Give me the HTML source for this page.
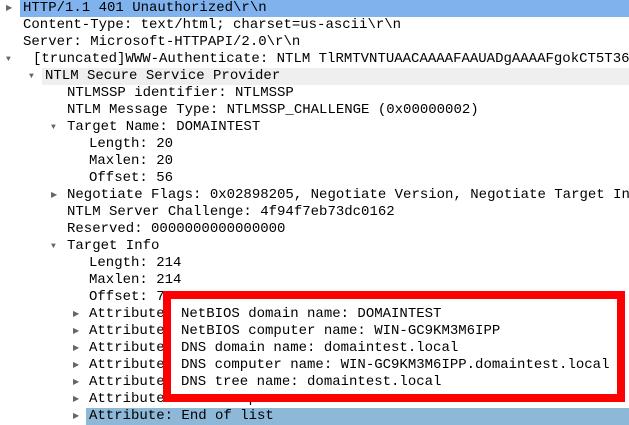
<!DOCTYPE html>
<html><head><style>
body{margin:0;width:629px;height:423px;overflow:hidden;background:#fff;font-family:"Liberation Mono",monospace;font-size:14px;color:#000;position:relative}
.r{position:absolute;height:17px;line-height:17px;white-space:pre;left:0;right:0}
.t{position:absolute;top:0}
.ar{position:absolute;top:0;font-size:8px;color:#666}
.box{position:absolute;left:163px;top:291px;width:446px;height:95px;border:8px solid #f00;background:#fff}
</style></head><body>
<div class="r" style="top:0"><div style="position:absolute;left:20px;right:0;top:0;height:17px;background:#80b3ee"></div><span class="ar" style="left:6px">▶</span><span class="t" style="left:23px">HTTP/1.1 401 Unauthorized\r\n</span></div>
<div class="r" style="top:17px"><span class="t" style="left:23px">Content-Type: text/html; charset=us-ascii\r\n</span></div>
<div class="r" style="top:34px"><span class="t" style="left:23px">Server: Microsoft-HTTPAPI/2.0\r\n</span></div>
<div class="r" style="top:51px"><span class="ar" style="left:6px">▼</span><span class="t" style="left:33px">[truncated]WWW-Authenticate: NTLM TlRMTVNTUAACAAAAFAAUADgAAAAFgokCT5T363</span></div>
<div class="r" style="top:68px"><div style="position:absolute;left:42px;right:0;top:0;height:17px;background:#efefef"></div><span class="ar" style="left:29px">▼</span><span class="t" style="left:45px">NTLM Secure Service Provider</span></div>
<div class="r" style="top:85px"><span class="t" style="left:67px">NTLMSSP identifier: NTLMSSP</span></div>
<div class="r" style="top:102px"><span class="t" style="left:67px">NTLM Message Type: NTLMSSP_CHALLENGE (0x00000002)</span></div>
<div class="r" style="top:119px"><span class="ar" style="left:51px">▼</span><span class="t" style="left:67px">Target Name: DOMAINTEST</span></div>
<div class="r" style="top:136px"><span class="t" style="left:89px">Length: 20</span></div>
<div class="r" style="top:153px"><span class="t" style="left:89px">Maxlen: 20</span></div>
<div class="r" style="top:170px"><span class="t" style="left:89px">Offset: 56</span></div>
<div class="r" style="top:187px"><span class="ar" style="left:51px">▶</span><span class="t" style="left:67px">Negotiate Flags: 0x02898205, Negotiate Version, Negotiate Target In</span></div>
<div class="r" style="top:204px"><span class="t" style="left:67px">NTLM Server Challenge: 4f94f7eb73dc0162</span></div>
<div class="r" style="top:221px"><span class="t" style="left:67px">Reserved: 0000000000000000</span></div>
<div class="r" style="top:238px"><span class="ar" style="left:51px">▼</span><span class="t" style="left:67px">Target Info</span></div>
<div class="r" style="top:255px"><span class="t" style="left:89px">Length: 214</span></div>
<div class="r" style="top:272px"><span class="t" style="left:89px">Maxlen: 214</span></div>
<div class="r" style="top:289px"><span class="t" style="left:89px">Offset: 76</span></div>
<div class="r" style="top:306px"><span class="ar" style="left:73px">▶</span><span class="t" style="left:89px">Attribute</span></div>
<div class="r" style="top:323px"><span class="ar" style="left:73px">▶</span><span class="t" style="left:89px">Attribute</span></div>
<div class="r" style="top:340px"><span class="ar" style="left:73px">▶</span><span class="t" style="left:89px">Attribute</span></div>
<div class="r" style="top:357px"><span class="ar" style="left:73px">▶</span><span class="t" style="left:89px">Attribute</span></div>
<div class="r" style="top:374px"><span class="ar" style="left:73px">▶</span><span class="t" style="left:89px">Attribute</span></div>
<div class="r" style="top:391px"><span class="ar" style="left:73px">▶</span><span class="t" style="left:89px">Attribute: Timestamp</span></div>
<div class="r" style="top:408px"><div style="position:absolute;left:86px;right:0;top:0;height:17px;background:#8db8d8"></div><span class="ar" style="left:73px">▶</span><span class="t" style="left:89px">Attribute: End of list</span></div>
<div class="box"></div>
<div class="r" style="top:306px"><span class="t" style="left:181px">NetBIOS domain name: DOMAINTEST</span></div>
<div class="r" style="top:323px"><span class="t" style="left:181px">NetBIOS computer name: WIN-GC9KM3M6IPP</span></div>
<div class="r" style="top:340px"><span class="t" style="left:181px">DNS domain name: domaintest.local</span></div>
<div class="r" style="top:357px"><span class="t" style="left:181px">DNS computer name: WIN-GC9KM3M6IPP.domaintest.local</span></div>
<div class="r" style="top:374px"><span class="t" style="left:181px">DNS tree name: domaintest.local</span></div>
</body></html>
